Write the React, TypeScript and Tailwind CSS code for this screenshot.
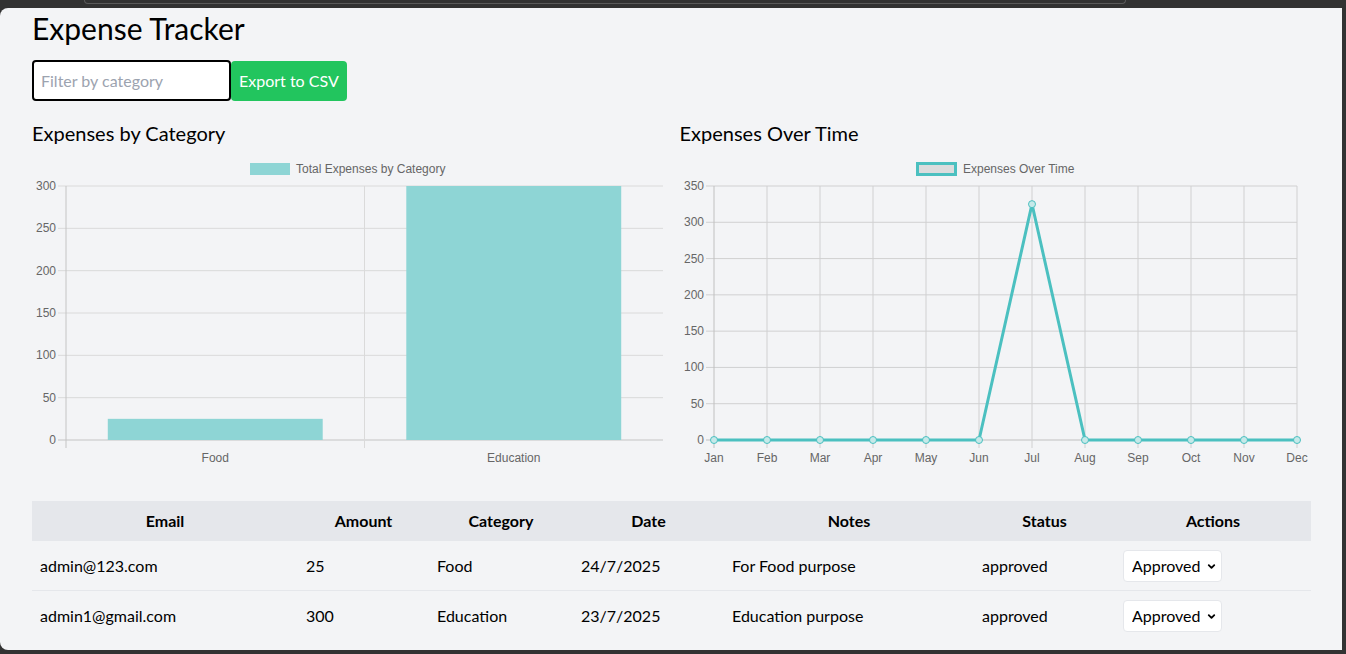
import React from 'react';
import { ChevronDown } from 'lucide-react';

interface Expense {
  email: string;
  amount: number;
  category: string;
  date: string;
  notes: string;
  status: string;
}

const expenses: Expense[] = [
  { email: 'admin@123.com', amount: 25, category: 'Food', date: '24/7/2025', notes: 'For Food purpose', status: 'approved' },
  { email: 'admin1@gmail.com', amount: 300, category: 'Education', date: '23/7/2025', notes: 'Education purpose', status: 'approved' },
];

const months = ['Jan', 'Feb', 'Mar', 'Apr', 'May', 'Jun', 'Jul', 'Aug', 'Sep', 'Oct', 'Nov', 'Dec'];
const monthly = [0, 0, 0, 0, 0, 0, 325, 0, 0, 0, 0, 0];

const TEAL = '#4bc0c0';
const TEAL_FILL = '#8ed5d5';
const LABEL = { fontFamily: '"Liberation Sans", Arial, sans-serif', fontSize: 12, fill: '#666' };

// chart area (local svg coords)
const TOP = 35;
const BOTTOM = 289;
const LEFT = 34;

const CategoryChart = () => {
  const max = 300;
  const right = 631;
  const ticks = [300, 250, 200, 150, 100, 50, 0];
  const yOf = (v: number) => BOTTOM - (v / max) * (BOTTOM - TOP);
  const slot = (right - LEFT) / 2;
  const bars = [
    { label: 'Food', value: 25 },
    { label: 'Education', value: 300 },
  ];

  return (
    <svg width="632" height="320" className="block">
      <rect x="218" y="12" width="40" height="12" fill={TEAL_FILL} />
      <text x="264" y="22" {...LABEL}>Total Expenses by Category</text>

      {ticks.map((t) => (
        <g key={t}>
          <line x1="26" x2={right} y1={yOf(t)} y2={yOf(t)} stroke={t === 0 ? '#c4c4c4' : '#dadada'} />
          <text x="24" y={yOf(t) + 4} textAnchor="end" {...LABEL}>{t}</text>
        </g>
      ))}
      <line x1={LEFT + slot} x2={LEFT + slot} y1={TOP} y2={BOTTOM + 8} stroke="#dadada" />
      <line x1={LEFT} x2={LEFT} y1={TOP} y2={BOTTOM + 8} stroke="#c4c4c4" />

      {bars.map((b, i) => {
        const x = LEFT + i * slot + slot * 0.14;
        return (
          <g key={b.label}>
            <rect x={x} y={yOf(b.value)} width={slot * 0.72} height={BOTTOM - yOf(b.value)} fill={TEAL_FILL} />
            <text x={LEFT + i * slot + slot / 2} y="311" textAnchor="middle" {...LABEL}>{b.label}</text>
          </g>
        );
      })}
    </svg>
  );
};

const TimeChart = () => {
  const max = 350;
  const step = 53;
  const right = LEFT + step * 11;
  const ticks = [350, 300, 250, 200, 150, 100, 50, 0];
  const yOf = (v: number) => BOTTOM - (v / max) * (BOTTOM - TOP);
  const xOf = (i: number) => LEFT + i * step;
  const points = monthly.map((v, i) => `${xOf(i)},${yOf(v)}`).join(' ');

  return (
    <svg width="632" height="320" className="block">
      <rect x="237.5" y="12.5" width="38" height="11" fill="#dbdcdd" stroke={TEAL} strokeWidth="3" />
      <text x="283" y="22" {...LABEL}>Expenses Over Time</text>

      {ticks.map((t) => (
        <g key={t}>
          <line x1="26" x2={right} y1={yOf(t)} y2={yOf(t)} stroke={t === 0 ? '#c0c0c0' : '#d0d0d1'} />
          <text x="24" y={yOf(t) + 4} textAnchor="end" {...LABEL}>{t}</text>
        </g>
      ))}
      {months.map((m, i) => (
        <g key={m}>
          <line x1={xOf(i)} x2={xOf(i)} y1={TOP} y2={BOTTOM + 8} stroke={i === 0 ? '#c0c0c0' : '#d0d0d1'} />
          <text x={xOf(i)} y="311" textAnchor="middle" {...LABEL}>{m}</text>
        </g>
      ))}

      <polyline points={points} fill="none" stroke={TEAL} strokeWidth="3" strokeLinejoin="round" />
      {monthly.map((v, i) => (
        <circle key={i} cx={xOf(i)} cy={yOf(v)} r="3.5" fill="#c6e9e9" stroke={TEAL} strokeWidth="1" />
      ))}
    </svg>
  );
};

const columns = [
  { title: 'Email', w: 'w-[266px]' },
  { title: 'Amount', w: 'w-[131px]' },
  { title: 'Category', w: 'w-[144px]' },
  { title: 'Date', w: 'w-[151px]' },
  { title: 'Notes', w: 'w-[250px]' },
  { title: 'Status', w: 'w-[141px]' },
  { title: 'Actions', w: 'w-[196px]' },
];

export default function App() {
  return (
    <div className="w-[1346px] h-[654px] bg-[#323232] flex flex-col overflow-hidden font-['Lato',sans-serif] text-black">
      {/* browser chrome above the page */}
      <div className="h-[8px] shrink-0 flex">
        <div className="ml-[84px] w-[1042px] h-[4px] border-b border-x border-[#5a5a5a] rounded-b-[6px]" />
      </div>

      <div className="flex-1 flex min-h-0">
        <main className="flex-1 bg-[#f3f4f6] rounded-l-[8px] overflow-hidden pl-8 pr-[31px] pt-[2px]">
          <h1 className="text-[30px] leading-[36px] mb-[14px]">Expense Tracker</h1>

          <div className="flex items-end mb-[18px]">
            <input
              type="text"
              placeholder="Filter by category"
              className="w-[199px] h-[41px] border-2 border-black rounded-[4px] bg-white px-[7px] text-base placeholder:text-[#9ca3af] outline-none"
            />
            <button className="h-[40px] px-2 bg-[#22c55e] text-white text-base rounded-[4px]">Export to CSV</button>
          </div>

          <div className="grid grid-cols-2 gap-4">
            <section>
              <h2 className="text-xl leading-7 mb-1">Expenses by Category</h2>
              <CategoryChart />
            </section>
            <section>
              <h2 className="text-xl leading-7 mb-1">Expenses Over Time</h2>
              <TimeChart />
            </section>
          </div>

          <table className="table-fixed w-[1279px] mt-[30px] border-collapse text-base">
            <thead>
              <tr className="bg-[#e5e7eb]">
                {columns.map((c) => (
                  <th key={c.title} className={`${c.w} py-2 px-2 font-bold text-center leading-6`}>{c.title}</th>
                ))}
              </tr>
            </thead>
            <tbody>
              {expenses.map((e, i) => (
                <tr key={e.email} className={i < expenses.length - 1 ? 'border-b border-[#e5e7eb]' : ''}>
                  <td className="px-2 pt-[9px] pb-2">{e.email}</td>
                  <td className="px-2 pt-[9px] pb-2">{e.amount}</td>
                  <td className="px-2 pt-[9px] pb-2">{e.category}</td>
                  <td className="px-2 pt-[9px] pb-2">{e.date}</td>
                  <td className="px-2 pt-[9px] pb-2">{e.notes}</td>
                  <td className="px-2 pt-[9px] pb-2">{e.status}</td>
                  <td className="px-2 pt-[9px] pb-2">
                    <div className="relative w-[99px]">
                      <select
                        defaultValue="approved"
                        className="appearance-none w-full h-8 bg-white border border-[#e5e7eb] rounded-[4px] pl-2 pr-4 text-base"
                      >
                        <option value="pending">Pending</option>
                        <option value="approved">Approved</option>
                        <option value="rejected">Rejected</option>
                      </select>
                      <ChevronDown size={11} strokeWidth={4} className="absolute right-[5px] top-[11px] pointer-events-none" />
                    </div>
                  </td>
                </tr>
              ))}
            </tbody>
          </table>
        </main>
        <div className="w-[4px] shrink-0" />
      </div>

      <div className="h-[4px] shrink-0" />
    </div>
  );
}
